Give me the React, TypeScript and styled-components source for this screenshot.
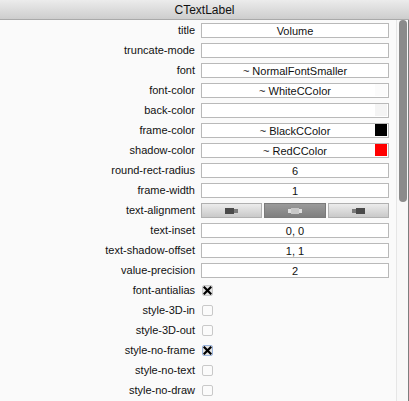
import React from "react";
import styled, { createGlobalStyle } from "styled-components";

const Global = createGlobalStyle`
  html, body { margin: 0; padding: 0; background: #fafafa; }
  body { font-family: "Liberation Sans", Arial, sans-serif; font-size: 11px; color: #111; }
`;

const Window = styled.div`
  width: 409px;
  height: 401px;
  display: flex;
  flex-direction: column;
  background: #fafafa;
  overflow: hidden;
`;

const Header = styled.div`
  height: 19px;
  border-bottom: 1px solid #a9a9a9;
  background: linear-gradient(#ececec, #cdcdcd);
  display: flex;
  align-items: center;
  justify-content: center;
  font-size: 12px;
  color: #111;
`;

const Body = styled.div`
  flex: 1;
  display: flex;
`;

const List = styled.div`
  width: 396px;
  display: flex;
  flex-direction: column;
`;

const Row = styled.div`
  height: 20px;
  display: grid;
  grid-template-columns: 195px 188px;
  column-gap: 6px;
  align-items: center;
`;

const Label = styled.div`
  text-align: right;
  white-space: nowrap;
  color: #111;
`;

const Field = styled.div`
  position: relative;
  height: 13px;
  border: 1px solid #b9b9b9;
  background: #fff;
  display: flex;
  align-items: center;
  justify-content: center;
  font-size: 11px;
  color: #111;
  margin-top: 1px;
`;

const Swatch = styled.div<{ $c: string }>`
  position: absolute;
  right: 1px;
  top: 0px;
  width: 12px;
  height: 12px;
  background: ${(p) => p.$c};
`;

const Segments = styled.div`
  display: flex;
  gap: 2px;
  height: 15px;
  margin-top: 1px;
`;

const Segment = styled.div<{ $on?: boolean }>`
  flex: 1;
  border: 1px solid ${(p) => (p.$on ? "#7a7a7a" : "#b0b0b0")};
  background: ${(p) =>
    p.$on ? "linear-gradient(#9a9a9a, #7f7f7f)" : "linear-gradient(#ececec, #c9c9c9)"};
  display: flex;
  align-items: center;
  justify-content: center;
`;

const Check = styled.div<{ $on?: boolean; $focus?: boolean }>`
  width: 9px;
  height: 9px;
  border: 1px solid ${(p) => (p.$focus ? "#9bb4dc" : "#c9c9c9")};
  border-radius: 2px;
  background: ${(p) => (p.$on ? "#e2e2e2" : "#fbfbfb")};
  display: flex;
  align-items: center;
  justify-content: center;
  margin-left: 1px;
`;

const ScrollTrack = styled.div`
  width: 11px;
  border-left: 1px solid #e6e6e6;
  border-right: 1px solid #7d7d7d;
  background: #f8f8f8;
  display: flex;
  flex-direction: column;
  align-items: center;
`;

const Thumb = styled.div`
  width: 8px;
  height: 182px;
  border-radius: 4px;
  background: #8b8b8b;
  margin-left: 1px;
`;

const AlignIcon = ({ pos, light }: { pos: "l" | "c" | "r"; light?: boolean }) => {
  const dark = light ? "#c8c8c8" : "#4a4a4a";
  const mid = light ? "#dedede" : "#7a7a7a";
  return (
    <svg width="14" height="6" viewBox="0 0 14 6">
      {pos === "l" && (
        <>
          <rect x="0" y="0" width="9" height="6" fill={dark} />
          <rect x="9" y="1" width="4" height="4" fill={mid} />
        </>
      )}
      {pos === "c" && (
        <>
          <rect x="3" y="0" width="8" height="6" fill={dark} />
          <rect x="0" y="1" width="3" height="4" fill={mid} />
          <rect x="11" y="1" width="3" height="4" fill={mid} />
        </>
      )}
      {pos === "r" && (
        <>
          <rect x="1" y="1" width="4" height="4" fill={mid} />
          <rect x="5" y="0" width="9" height="6" fill={dark} />
        </>
      )}
    </svg>
  );
};

const XMark = () => (
  <svg width="9" height="9" viewBox="0 0 9 9">
    <path d="M1.5 1.5 L7.5 7.5 M7.5 1.5 L1.5 7.5" stroke="#000" strokeWidth="2.2" strokeLinecap="square" />
  </svg>
);

type Item =
  | { kind: "text"; label: string; value?: string; swatch?: string }
  | { kind: "align"; label: string }
  | { kind: "check"; label: string; on?: boolean; focus?: boolean };

const items: Item[] = [
  { kind: "text", label: "title", value: "Volume" },
  { kind: "text", label: "truncate-mode", value: "" },
  { kind: "text", label: "font", value: "~ NormalFontSmaller" },
  { kind: "text", label: "font-color", value: "~ WhiteCColor", swatch: "#fbfbfb" },
  { kind: "text", label: "back-color", value: "", swatch: "#f4f4f4" },
  { kind: "text", label: "frame-color", value: "~ BlackCColor", swatch: "#000" },
  { kind: "text", label: "shadow-color", value: "~ RedCColor", swatch: "#ff0000" },
  { kind: "text", label: "round-rect-radius", value: "6" },
  { kind: "text", label: "frame-width", value: "1" },
  { kind: "align", label: "text-alignment" },
  { kind: "text", label: "text-inset", value: "0, 0" },
  { kind: "text", label: "text-shadow-offset", value: "1, 1" },
  { kind: "text", label: "value-precision", value: "2" },
  { kind: "check", label: "font-antialias", on: true },
  { kind: "check", label: "style-3D-in" },
  { kind: "check", label: "style-3D-out" },
  { kind: "check", label: "style-no-frame", on: true, focus: true },
  { kind: "check", label: "style-no-text" },
  { kind: "check", label: "style-no-draw" },
];

export default function App() {
  return (
    <>
      <Global />
      <Window>
        <Header>CTextLabel</Header>
        <Body>
          <List>
            {items.map((it) => (
              <Row key={it.label}>
                <Label>{it.label}</Label>
                {it.kind === "text" && (
                  <Field>
                    {it.value}
                    {it.swatch && <Swatch $c={it.swatch} />}
                  </Field>
                )}
                {it.kind === "align" && (
                  <Segments>
                    <Segment>
                      <AlignIcon pos="l" />
                    </Segment>
                    <Segment $on>
                      <AlignIcon pos="c" light />
                    </Segment>
                    <Segment>
                      <AlignIcon pos="r" />
                    </Segment>
                  </Segments>
                )}
                {it.kind === "check" && (
                  <Check $on={it.on} $focus={it.focus}>
                    {it.on && <XMark />}
                  </Check>
                )}
              </Row>
            ))}
          </List>
          <ScrollTrack>
            <Thumb />
          </ScrollTrack>
        </Body>
      </Window>
    </>
  );
}
